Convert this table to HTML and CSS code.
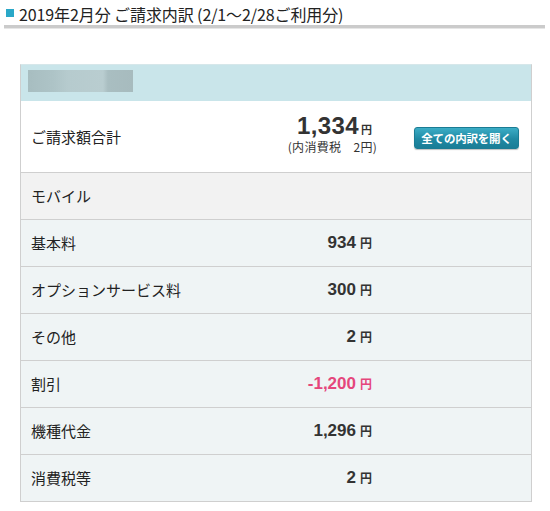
FILE: index.html
```html
<!DOCTYPE html>
<html lang="ja">
<head>
<meta charset="utf-8">
<link rel="stylesheet" href="styles.css">
</head>
<body>
<div class="title">
  <span class="sq"></span>
  <span class="title-text">2019年2月分 ご請求内訳 (2/1〜2/28ご利用分)</span>
</div>
<div class="bill">
  <div class="head"><div class="blur"></div></div>
  <div class="total">
    <div class="label">ご請求額合計</div>
    <div class="tamt">
      <div class="big"><span class="num">1,334</span><span class="yen">円</span></div>
      <div class="tax">(内消費税　2円)</div>
    </div>
    <div class="btncell"><span class="btn">全ての内訳を開く</span></div>
  </div>
  <div class="row cat"><div class="label">モバイル</div></div>
  <div class="row"><div class="label">基本料</div><div class="amt"><span class="num">934</span><span class="yen">円</span></div></div>
  <div class="row"><div class="label">オプションサービス料</div><div class="amt"><span class="num">300</span><span class="yen">円</span></div></div>
  <div class="row"><div class="label">その他</div><div class="amt"><span class="num">2</span><span class="yen">円</span></div></div>
  <div class="row"><div class="label">割引</div><div class="amt neg"><span class="num">-1,200</span><span class="yen">円</span></div></div>
  <div class="row"><div class="label">機種代金</div><div class="amt"><span class="num">1,296</span><span class="yen">円</span></div></div>
  <div class="row"><div class="label">消費税等</div><div class="amt"><span class="num">2</span><span class="yen">円</span></div></div>
</div>
</body>
</html>
```

FILE: styles.css
```css
html, body {
  margin: 0;
  padding: 0;
  background: #fff;
}
body {
  font-family: "Noto Sans CJK JP", "Liberation Sans", sans-serif;
  color: #333;
}
.title {
  margin: 0 5px 0 4px;
  height: 28px;
  box-sizing: border-box;
  padding: 2px 0 0 2px;
  display: flex;
  align-items: center;
  gap: 5px;
  border-bottom: 3px solid #cbcbcb;
  box-shadow: 0 1px 0 #e6e6e6;
}
.sq {
  width: 8px;
  height: 8px;
  background: #2aa8c8;
  margin-top: -1px;
}
.title-text {
  font-size: 16px;
  line-height: 20px;
  color: #222;
  letter-spacing: -0.1px;
}
.bill {
  margin: 36px 0 0 20px;
  width: 512px;
  box-sizing: border-box;
  border: 1px solid #cfcfcf;
  border-top-color: #d6e7ea;
}
.head {
  height: 36px;
  background: #c9e5ea;
  padding: 5px 0 0 7px;
  box-sizing: border-box;
}
.blur {
  width: 105px;
  height: 22px;
  background: linear-gradient(90deg, #a7bdc0 0, #aec4c7 26px, #b6cbce 40px, #b9cdd0 75px, #a9bec1 80px, #a7bbbe 105px);
  filter: blur(0.6px);
}
.total {
  height: 71px;
  background: #fff;
  display: grid;
  grid-template-columns: 253px 117px 1fr;
  align-items: center;
}
.label {
  padding-left: 10px;
  font-size: 15px;
  line-height: 20px;
  color: #222;
}
.tamt {
  display: flex;
  flex-direction: column;
  align-items: center;
  margin-top: -6px;
}
.big {
  display: flex;
  align-items: baseline;
  padding-left: 4px;
}
.big .num {
  font-family: "Liberation Sans", sans-serif;
  font-weight: bold;
  font-size: 24px;
  line-height: 26px;
  letter-spacing: 0.4px;
  color: #333;
}
.big .yen {
  font-size: 11px;
  font-weight: bold;
  margin-left: 2px;
}
.tax {
  font-size: 12px;
  line-height: 15px;
  letter-spacing: 0.3px;
  color: #333;
}
.btncell {
  padding-left: 23px;
}
.btn {
  display: inline-block;
  width: 105px;
  height: 22px;
  box-sizing: border-box;
  border-radius: 3px;
  background: linear-gradient(#3cadc6, #1f89a3 55%, #1a7d96);
  border: 1px solid #1b7c94;
  box-shadow: 0 1px 1px rgba(0,0,0,0.25);
  color: #fff;
  font-size: 11.5px;
  font-weight: bold;
  line-height: 20px;
  text-align: center;
  letter-spacing: -0.2px;
}
.row {
  height: 47px;
  box-sizing: border-box;
  border-top: 1px solid #cfcfcf;
  background: #eff4f5;
  display: grid;
  grid-template-columns: 180px 171px;
  align-items: center;
}
.row.cat {
  background: #f2f2f2;
}
.amt {
  display: flex;
  justify-content: flex-end;
  align-items: baseline;
}
.amt .num {
  font-family: "Liberation Sans", sans-serif;
  font-weight: bold;
  font-size: 17px;
  color: #333;
}
.amt .yen {
  font-size: 12px;
  font-weight: bold;
  margin-left: 4px;
  color: #333;
}
.amt.neg .num, .amt.neg .yen {
  color: #e5467c;
}
```
